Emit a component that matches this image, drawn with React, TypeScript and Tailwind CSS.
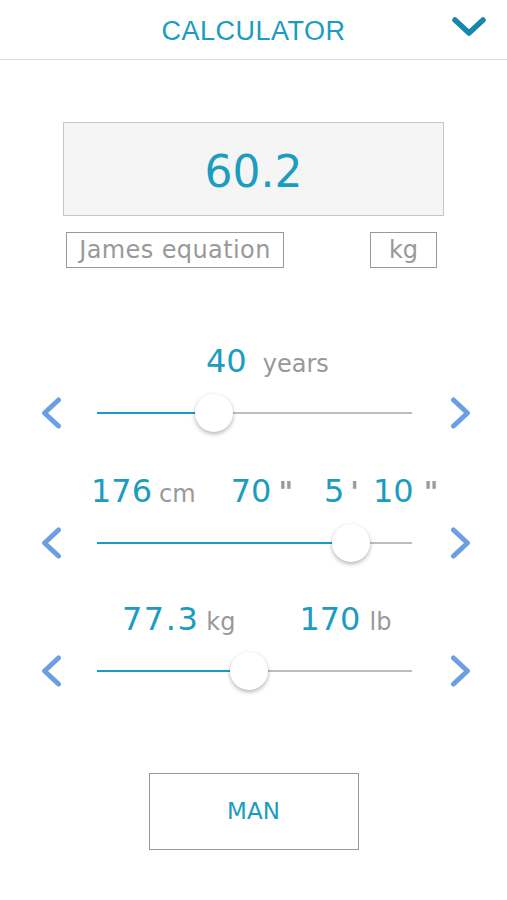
const Chevron = ({ dir }: { dir: "left" | "right" }) => (
  <svg width="22" height="32" viewBox="0 0 22 32" className="shrink-0">
    <path
      d={dir === "left" ? "M18.5 3 L4.5 16 L18.5 29" : "M3.5 3 L17.5 16 L3.5 29"}
      fill="none"
      stroke="#6b9fe4"
      strokeWidth="5"
      strokeLinecap="round"
      strokeLinejoin="round"
    />
  </svg>
)

const Slider = ({ pct }: { pct: number }) => (
  <div className="mt-[12px] flex items-center h-[40px] pl-[40px] pr-[35px]">
    <Chevron dir="left" />
    <div className="relative flex-1 ml-[35px] mr-[38px] h-[2px] bg-[#bdbdbd]">
      <div className="absolute left-0 top-0 h-[2px] bg-[#1b9cc0]" style={{ width: `${pct}%` }} />
      <div
        className="absolute top-1/2 w-[38px] h-[38px] -translate-x-1/2 -translate-y-1/2 rounded-full bg-white shadow-[0_2px_4px_rgba(0,0,0,0.3)]"
        style={{ left: `${pct}%` }}
      />
    </div>
    <Chevron dir="right" />
  </div>
)

const Num = ({ children, className = "" }: { children: React.ReactNode; className?: string }) => (
  <span className={`text-[32px] leading-[40px] text-[#1b9cc0] ${className}`}>{children}</span>
)

const Unit = ({ children, className = "" }: { children: React.ReactNode; className?: string }) => (
  <span className={`text-[24px] leading-[40px] text-[#999] ${className}`}>{children}</span>
)

const Mark = ({ children, className = "" }: { children: React.ReactNode; className?: string }) => (
  <span className={`text-[28px] leading-[40px] font-bold text-[#9a9a9a] ${className}`}>{children}</span>
)

export default function App() {
  return (
    <div className="w-[507px] h-[900px] bg-white flex flex-col" style={{ fontFamily: '"DejaVu Sans", Verdana, sans-serif' }}>
      <div className="relative h-[60px] border-b border-[#dcdcdc] flex items-center justify-center">
        <span
          className="text-[27px] text-[#1b9cc0] tracking-[0.5px] pt-[3px]"
          style={{ fontFamily: '"Liberation Sans", sans-serif' }}
        >
          CALCULATOR
        </span>
        <svg width="36" height="22" viewBox="0 0 36 22" className="absolute left-[451px] top-[16px]">
          <path d="M4 4 L18 17 L32 4" fill="none" stroke="#1787ab" strokeWidth="5.5" strokeLinecap="round" strokeLinejoin="round" />
        </svg>
      </div>

      <div className="mt-[62px] mx-[63px] h-[94px] bg-[#f5f5f5] border border-[#c6c6c6] flex items-center justify-center pt-[5px]">
        <span className="text-[44px] text-[#1b9cc0]">60.2</span>
      </div>

      <div className="mt-[16px] flex justify-between pl-[66px] pr-[70px]">
        <div className="w-[218px] h-[36px] border-[1.5px] border-[#9a9a9a] flex items-center justify-center text-[24px] tracking-[0.4px] text-[#999]">
          James equation
        </div>
        <div className="w-[67px] h-[36px] border-[1.5px] border-[#9a9a9a] flex items-center justify-center text-[24px] text-[#999]">
          kg
        </div>
      </div>

      <div className="mt-[73px] flex items-baseline h-[40px] pl-[206px]">
        <Num>40</Num>
        <Unit className="ml-[16px]">years</Unit>
      </div>
      <Slider pct={37.1} />

      <div className="mt-[38px] flex items-baseline h-[40px] pl-[91px]">
        <Num>176</Num>
        <Unit className="ml-[7px]">cm</Unit>
        <Num className="ml-[35px]">70</Num>
        <Mark className="ml-[7px]">"</Mark>
        <Num className="ml-[31px]">5</Num>
        <Mark className="ml-[6px]">'</Mark>
        <Num className="ml-[14px]">10</Num>
        <Mark className="ml-[10px]">"</Mark>
      </div>
      <Slider pct={80.6} />

      <div className="mt-[36px] flex items-baseline h-[40px] pl-[122px]">
        <Num className="tracking-[1.5px]">77.3</Num>
        <Unit className="ml-[7px]">kg</Unit>
        <Num className="ml-[64px]">170</Num>
        <Unit className="ml-[9px]">lb</Unit>
      </div>
      <Slider pct={48.3} />

      <div className="mt-[82px] mx-auto w-[210px] h-[77px] border-[1.5px] border-[#9a9a9a] flex items-center justify-center text-[23px] text-[#1b9cc0]">
        MAN
      </div>
    </div>
  )
}
